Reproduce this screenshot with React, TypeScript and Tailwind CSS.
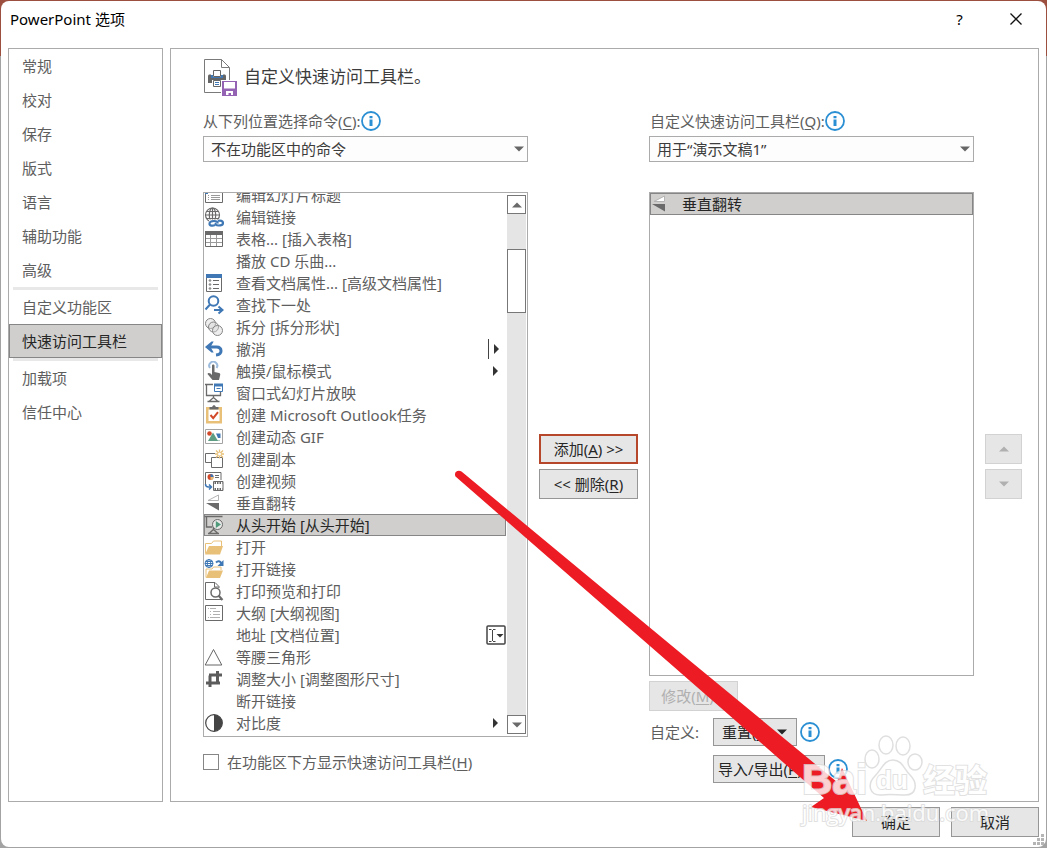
import { useState } from "react";
import type { ReactNode } from "react";
import clsx from "clsx";

type Command = {
  label: string;
  icon?: string;
  trailing?: "menu" | "split" | "combo";
};

const NAV_GROUPS: string[][] = [
  ["常规", "校对", "保存", "版式", "语言", "辅助功能", "高级"],
  ["自定义功能区", "快速访问工具栏"],
  ["加载项", "信任中心"],
];

const COMMANDS: Command[] = [
  { label: "编辑幻灯片标题", icon: "slideTitle" },
  { label: "编辑链接", icon: "editLink" },
  { label: "表格... [插入表格]", icon: "table" },
  { label: "播放 CD 乐曲..." },
  { label: "查看文档属性... [高级文档属性]", icon: "properties" },
  { label: "查找下一处", icon: "findNext" },
  { label: "拆分 [拆分形状]", icon: "fragment" },
  { label: "撤消", icon: "undo", trailing: "split" },
  { label: "触摸/鼠标模式", icon: "touch", trailing: "menu" },
  { label: "窗口式幻灯片放映", icon: "windowShow" },
  { label: "创建 Microsoft Outlook任务", icon: "task" },
  { label: "创建动态 GIF", icon: "gif" },
  { label: "创建副本", icon: "duplicate" },
  { label: "创建视频", icon: "video" },
  { label: "垂直翻转", icon: "flip" },
  { label: "从头开始 [从头开始]", icon: "play" },
  { label: "打开", icon: "open" },
  { label: "打开链接", icon: "openLink" },
  { label: "打印预览和打印", icon: "preview" },
  { label: "大纲 [大纲视图]", icon: "outline" },
  { label: "地址 [文档位置]", trailing: "combo" },
  { label: "等腰三角形", icon: "triangle" },
  { label: "调整大小 [调整图形尺寸]", icon: "crop" },
  { label: "断开链接" },
  { label: "对比度", icon: "contrast", trailing: "menu" },
];

const GRAY = "#6a6a6a";
const BLUE = "#3f78b5";
const SAND = "#e8c078";

const ICONS: Record<string, ReactNode> = {
  slideTitle: (
    <>
      <path d="M1.5 4.5h17v13h-17z" fill="#fff" stroke={GRAY} />
      <path d="M4 10.5h1M7 10.5h9M4 12.5h1M7 12.5h9M4 14.5h1M7 14.5h9" stroke="#9a9a9a" />
      <path d="M1 4h3v5H1z" fill={BLUE} />
    </>
  ),
  editLink: (
    <>
      <g fill="none" stroke={GRAY} strokeWidth="1.2">
        <circle cx="8.5" cy="8" r="7" />
        <ellipse cx="8.5" cy="8" rx="3.2" ry="7" />
        <path d="M1.5 8h14M2.5 4.5h12M2.5 11.5h12M8.5 1v14" />
      </g>
      <path d="M5 12.5h15v7H5z" fill="#fff" />
      <g fill="none" stroke={BLUE} strokeWidth="2.2">
        <path d="M11 18c-2 1-5.500 1-5.500-1.300s2-2.700 4.500-2.700 4 1 3.500 2.500" />
        <path d="M14 14c2.500-1 5 0 5 2s-2 2.500-4.500 2.500S11 17.500 12 16" />
      </g>
    </>
  ),
  table: (
    <>
      <path d="M1.500 2.500h17v15h-17z" fill="#fff" stroke={GRAY} />
      <path d="M1 2h18v4H1z" fill={GRAY} />
      <path d="M6.500 6v11M12.500 6v11M2 9.500h16M2 13.500h16" stroke="#9a9a9a" />
    </>
  ),
  properties: (
    <>
      <path d="M2.500 2.500h15v16h-15z" fill="#fff" stroke={GRAY} />
      <path d="M2 1h16v4H2z" fill={BLUE} />
      <path d="M9 7.500h6M9 11.500h6M9 15.500h6" stroke={GRAY} />
      <g fill="none" stroke={GRAY}>
        <circle cx="6" cy="7.500" r=".8" />
        <circle cx="6" cy="11.500" r=".8" />
        <circle cx="6" cy="15.500" r=".8" />
      </g>
    </>
  ),
  findNext: (
    <g fill="none" stroke={BLUE} strokeWidth="2">
      <circle cx="9.500" cy="6" r="4.800" />
      <path d="M6 9.500 1.500 14.500M10 15h8" />
      <path d="m14.500 11.500 4 3.500-4 3.500" />
    </g>
  ),
  fragment: (
    <g fill="#d4d4d4" fillOpacity=".4" stroke="#858585">
      <circle cx="6.500" cy="6.500" r="5" />
      <circle cx="9.500" cy="10" r="5" />
      <circle cx="13.500" cy="13.500" r="5" />
    </g>
  ),
  undo: (
    <>
      <path d="M4 8h8.500c3 0 4.500 1.500 4.500 4s-2 3.700-5 4" fill="none" stroke={BLUE} strokeWidth="3" />
      <path d="M1 8 7.500 2.500h2.200L6.500 8l3.200 5.500H7.500z" fill={BLUE} />
    </>
  ),
  touch: (
    <>
      <path d="M6 7a4 4 0 1 1 6.500 0" fill="none" stroke="#9dbbdc" strokeWidth="2" />
      <path d="M8 4.500c0-1.500 2.500-1.500 2.500 0V11l4.500 1c1 .3 1.500 1 1.200 2L15 19H8.500L3.500 13c.5-1.500 2-1.300 3-.5L8 14z" fill={GRAY} />
    </>
  ),
  windowShow: (
    <>
      <g fill="none" stroke={GRAY} strokeWidth="1.300">
        <path d="M1 1.500h8M2.500 2v10.500h14V9M9.500 12.500v3M5 18.500l4.500-4 4.500 4M3.500 18.500h12" />
      </g>
      <path d="M10.500 1.500h8v7h-8z" fill="#fff" stroke={BLUE} />
      <path d="M10 .5h9v3h-9z" fill={BLUE} />
      <path d="M12.500 5.500h4" stroke={BLUE} />
    </>
  ),
  task: (
    <>
      <path d="M2 2h16v16.500H2z" fill={SAND} />
      <path d="M4.500 4.500h11V16h-11z" fill="#fff" />
      <path d="M5.500 4.500V2h2.700c.4-2.500 3.200-2.500 3.600 0h2.700v2.500z" fill={GRAY} />
      <path d="m6.500 10 2.700 3.200 4.800-6" fill="none" stroke="#d2492a" strokeWidth="2" />
    </>
  ),
  gif: (
    <>
      <path d="M1.500 2.500h17v14h-17z" fill="#fff" stroke="#a3a3a3" />
      <circle cx="5.500" cy="6.500" r="2.300" fill="#d2492a" />
      <path d="m4 14 5-8.500L14 14z" fill="#5e9c83" />
      <path d="M12 6.500h4.500v4.500H14z" fill={BLUE} />
      <path d="M12.500 13.500h4" stroke="#5e9c83" strokeDasharray="1 1" />
    </>
  ),
  duplicate: (
    <>
      <path d="M7 13.500H1.500v-9H11" fill="none" stroke={GRAY} />
      <path d="M7.500 8.500h11v10h-11z" fill="#fff" stroke={GRAY} />
      <path d="M15.500.5v9M11 5h9M12 1.500l7 7M19 1.500l-7 7" stroke={SAND} strokeWidth="1.300" />
      <circle cx="15.500" cy="5" r="1.500" fill="#fff" />
    </>
  ),
  video: (
    <>
      <path d="M1.500 13V1.500h15.500V9" fill="#fff" stroke={GRAY} />
      <circle cx="6.500" cy="6" r="3" fill="#d2492a" />
      <path d="M6.500 6V3a3 3 0 0 1 3 3z" fill={BLUE} />
      <path d="M6.500 6h3a3 3 0 0 1-3 3z" fill={SAND} />
      <path d="M11 4.500h4M11 6.500h4" stroke={GRAY} />
      <path d="M1.500 13c0 2 1 3 3 3H7M5 13.500 7.500 16 5 18.500" fill="none" stroke={BLUE} strokeWidth="1.500" />
      <path d="M9.500 10.500h9.500v9H9.500z" fill="#fff" stroke={GRAY} />
      <path d="M10.500 12h8M10.500 18h8" stroke={GRAY} strokeWidth="2" strokeDasharray="1.500 1" />
    </>
  ),
  flip: (
    <>
      <path d="M4 7.500 14.500 2v5.500z" fill="#fff" stroke="#b4b4b4" />
      <path d="M2 10h13v7.500z" fill={GRAY} />
    </>
  ),
  play: (
    <>
      <path d="M.5 1.500h18M2.500 2v10h6M9.500 13v2.500M5 18.500l4.500-4 4.500 4M4 18.500h11" fill="none" stroke={GRAY} strokeWidth="1.400" />
      <circle cx="13.500" cy="9.500" r="5" fill="#e8e8e8" stroke={GRAY} />
      <path d="m11.800 6 5.200 3.500-5.200 3.500z" fill="#4f9a7a" />
    </>
  ),
  open: (
    <>
      <path d="M1.500 16.500v-10h6l2-2.500h8v5" fill="#fff" stroke={SAND} />
      <path d="M5 9h14l-3 8.500H1z" fill={SAND} />
    </>
  ),
  openLink: (
    <>
      <path d="M2 18.500V10h6l1.500-2H17v3" fill="#fff" stroke={SAND} />
      <path d="M5 11.500h14l-3 7.500H2z" fill={SAND} />
      <circle cx="5" cy="4.500" r="4.800" fill="#fff" />
      <g fill="none" stroke={BLUE}>
        <circle cx="5" cy="4.500" r="4" />
        <ellipse cx="5" cy="4.500" rx="1.800" ry="4" />
        <path d="M1 4.500h8M1.500 2.500h7M1.500 6.500h7" />
        <path d="M12 3.500c2-2 4-1.500 5.500 1" strokeWidth="2" />
      </g>
      <path d="M19.500 1v6h-6z" fill={BLUE} />
    </>
  ),
  preview: (
    <>
      <path d="M17 18.500H1.500v-17H11l4 4V7" fill="#fff" stroke={GRAY} />
      <path d="M10.500 1.500v4.500H15" fill="none" stroke={GRAY} />
      <circle cx="11.500" cy="11.500" r="4.500" fill="#fff" stroke={GRAY} strokeWidth="1.500" />
      <path d="m14.500 14.500 4 4.500" stroke={GRAY} strokeWidth="2.200" />
    </>
  ),
  outline: (
    <>
      <path d="M1.500 2.500h17v15h-17z" fill="#fff" stroke={GRAY} />
      <path d="M4 5.500h1M6 5.500h6M6 8.500h1M9 8.500h7M6 11.500h1M9 11.500h7M4 14.500h1M6 14.500h10" stroke="#b0b0b0" />
    </>
  ),
  triangle: <path d="M9.500 2.500 17.800 18H1.200z" fill="none" stroke="#666" />,
  crop: (
    <path d="M6 6.500V18M13.500 2v12M2 14h14M5 6h13" fill="none" stroke="#5c5c5c" strokeWidth="3" />
  ),
  contrast: (
    <>
      <circle cx="10" cy="10" r="8.300" fill="#fff" stroke="#444" strokeWidth="1.200" />
      <path d="M10 1.700a8.300 8.300 0 0 1 0 16.600z" fill="#444" />
    </>
  ),
};

function CommandIcon({ name }: { name?: string }) {
  return (
    <svg viewBox="0 0 20 20" className="size-5 shrink-0" aria-hidden="true">
      {name ? ICONS[name] : null}
    </svg>
  );
}

function Trailing({ kind }: { kind: "menu" | "split" | "combo" }) {
  return (
    <svg viewBox="0 0 20 20" className="ml-auto size-5 shrink-0" aria-hidden="true">
      {kind === "menu" && <path d="M7 5v10l5-5z" fill="#333" />}
      {kind === "split" && (
        <>
          <path d="M2.500 0v20" stroke="#444" />
          <path d="M8 5v10l5-5z" fill="#333" />
        </>
      )}
      {kind === "combo" && (
        <>
          <rect x="1" y="1" width="18" height="18" rx="1" fill="#fff" stroke="#444" strokeWidth="1.500" />
          <path d="M3 4.500h2.500M7 4.500h2.500M3 16.500h2.500M7 16.500h2.500M6.500 5v11" stroke="#444" />
          <path d="M10.500 9h7L14 12.500z" fill="#333" />
        </>
      )}
    </svg>
  );
}

function CommandRow({ command, selected, onSelect }: { command: Command; selected: boolean; onSelect?: () => void }) {
  return (
    <li
      role="option"
      aria-selected={selected}
      onClick={onSelect}
      className={clsx(
        "flex h-[22px] items-center whitespace-nowrap",
        selected ? "bg-[#d0cfcd] text-[#262626] ring-1 ring-inset ring-[#868686]" : "text-[#5e5e5e]",
      )}
    >
      <CommandIcon name={command.icon} />
      <span className="ml-3">{command.label}</span>
      {command.trailing && <Trailing kind={command.trailing} />}
    </li>
  );
}

function InfoIcon() {
  return (
    <svg viewBox="0 0 20 20" className="size-5 shrink-0" role="img" aria-label="信息">
      <circle cx="10" cy="10" r="9" fill="#fff" stroke="#2b8fd3" strokeWidth="1.800" />
      <path d="M8.500 5h3v2.200h-3zM8.500 8.500h3V15h-3z" fill="#2b8fd3" />
    </svg>
  );
}

function Arrow({ up, className }: { up?: boolean; className?: string }) {
  return (
    <svg viewBox="0 0 10 6" className={clsx("h-[6px] w-[10px]", className)} aria-hidden="true">
      <path d={up ? "M0 5.500h10L5 .5z" : "M0 .5h10L5 5.500z"} fill="currentColor" />
    </svg>
  );
}

function Dropdown({ id, value }: { id: string; value: string }) {
  return (
    <div className="relative mt-[5px]">
      <select
        id={id}
        className="block h-[26px] w-full appearance-none border border-[#ababab] bg-[#fdfdfd] pl-[7px] text-[#3c3c3c]"
      >
        <option>{value}</option>
      </select>
      <Arrow className="pointer-events-none absolute top-[10px] right-1 text-[#666]" />
    </div>
  );
}

const BUTTON = "border border-[#969696] bg-[#e6e6e6] text-[#262626] whitespace-nowrap";
const BUTTON_DISABLED = "border border-[#d2d2d2] bg-[#e6e6e6] text-[#b0b0b0] whitespace-nowrap";

function HeadingIcon() {
  return (
    <svg viewBox="0 0 36 40" className="h-10 w-9" aria-hidden="true">
      <path d="M1.500 1.500h17l8 8v25h-25z" fill="#fff" stroke="#7a7a7a" />
      <path d="M18.500 1.500v8h8" fill="none" stroke="#7a7a7a" />
      <path d="M5 18.500c0-1.500.5-2 2-2h14c1.500 0 2 .5 2 2V25H5z" fill="#666" />
      <path d="M8 16h12v4H8z" fill="#fff" />
      <path d="M10.500 12.500h7v6h-7z" fill="#fff" stroke="#666" />
      <path d="M8 17h2v2h8v-2h2v3H8z" fill={BLUE} />
      <path d="M9 22h10v7.500H9z" fill="#fff" />
      <path d="M10.500 22.500h7v6h-7z" fill="#fff" stroke="#666" />
      <path d="M12 24.500h4M12 26.500h4" stroke={BLUE} />
      <path d="M18 22h17v17H18z" fill="#fff" />
      <path d="M19 23h15v15H19z" fill="#9563b4" />
      <path d="M21 24h11v6.500H21zM23 33h7v4h-2v-2h-2.500v2H23z" fill="#fff" />
    </svg>
  );
}

function Watermark() {
  return (
    <div className="pointer-events-none absolute right-[57px] bottom-[24px] w-[188px] text-white opacity-80" aria-hidden="true">
      <svg viewBox="0 0 64 66" className="absolute -top-px left-[60px] h-[66px] w-16">
        <g fill="#fff" stroke="#d8d8d8" strokeWidth="1.500">
          <ellipse cx="10" cy="26" rx="7" ry="9" />
          <ellipse cx="24" cy="12" rx="7" ry="9" />
          <ellipse cx="41" cy="13" rx="7" ry="9" />
          <ellipse cx="53" cy="29" rx="7" ry="8" />
          <path d="M31 27c9 0 11 9 17 15 8 8 7 20-5 20-7 0-17-1-23 0-13 1-15-11-7-19 7-7 9-16 18-16z" />
        </g>
      </svg>
      <div className="relative flex h-[66px] items-end font-bold [paint-order:stroke_fill] [-webkit-text-stroke:2px_#dadada]">
        <span className="w-[74px] font-['Liberation_Sans',sans-serif] text-[42px] leading-10">Bai</span>
        <span className="w-[47px] font-['Liberation_Sans',sans-serif] text-[26px] leading-10">du</span>
        <span className="text-[32px] leading-10">经验</span>
      </div>
      <div className="relative font-['Open_Sans',sans-serif] text-[22px] leading-6 [paint-order:stroke_fill] [-webkit-text-stroke:2px_#dadada]">
        jingyan.baidu.com
      </div>
    </div>
  );
}

function PointerArrow() {
  return (
    <svg
      viewBox="0 0 414 353"
      className="pointer-events-none absolute top-[469px] left-[453px] h-[353px] w-[414px]"
      aria-hidden="true"
    >
      <path
        d="M2.500 7.500C.5 3.500 4.500.5 8.500 2.500L236 191l148 122 5-14 25 53-56-14 13-9L213 191z"
        fill="#ed1c24"
      />
    </svg>
  );
}

export default function App() {
  const [section, setSection] = useState("快速访问工具栏");
  const [selected, setSelected] = useState(15);

  return (
    <div className="relative flex min-h-screen flex-col bg-[#a3a3a3] bg-[linear-gradient(#9c4f3f_56px,#a3a3a3_56px)] p-px font-['Noto_Sans','Noto_Sans_CJK_SC',sans-serif] text-[15px] leading-5 text-[#5e5e5e]">
      <div className="flex flex-1 flex-col rounded-lg bg-white px-[7px]">
        <header className="flex h-[47px] items-start justify-between pt-2 pl-[2px] text-black">
          <h1>PowerPoint 选项</h1>
          <div className="flex items-center">
            <button type="button" aria-label="帮助" className="h-5 w-[67px]">
              ?
            </button>
            <button type="button" aria-label="关闭" className="flex h-5 w-[46px] items-center justify-center">
              <svg viewBox="0 0 12 12" className="size-3" aria-hidden="true">
                <path d="m.5.500 11 11M11.500.5l-11 11" stroke="#111" strokeWidth="1.300" />
              </svg>
            </button>
          </div>
        </header>

        <main className="flex flex-1 gap-[7px]">
          <nav className="w-[155px] shrink-0 border border-[#ababab]">
            {NAV_GROUPS.map((group, index) => (
              <div key={group[0]}>
                {index > 0 && <div className="mx-1 h-[3px] bg-[#e8e8e8]" />}
                <ul>
                  {group.map((item) => (
                    <li key={item}>
                      <button
                        type="button"
                        onClick={() => setSection(item)}
                        className={clsx(
                          "block h-[34px] w-full pl-[13px] text-left",
                          item === section && "bg-[#d0cfcd] text-[#262626] ring-1 ring-inset ring-[#868686]",
                        )}
                      >
                        {item}
                      </button>
                    </li>
                  ))}
                </ul>
              </div>
            ))}
          </nav>

          <section className="flex flex-1 flex-col border border-[#ababab] pt-[9px] pr-4 pl-8">
            <div className="flex items-center gap-[5px]">
              <HeadingIcon />
              <h2 className="pb-[2px] text-[17px] text-[#3c3c3c]">自定义快速访问工具栏。</h2>
            </div>

            <div className="mt-[13px] flex flex-1 gap-[11px]">
              <div className="flex flex-1 flex-col pb-[31px]">
                <div className="flex h-5 items-center">
                  <label htmlFor="source">
                    从下列位置选择命令(<u className="underline-offset-2">C</u>):
                  </label>
                  <InfoIcon />
                </div>
                <Dropdown id="source" value="不在功能区中的命令" />

                <div className="mt-[30px] flex flex-1 gap-px overflow-hidden border border-[#ababab] pr-px">
                  <ul role="listbox" aria-label="命令" className="-mt-[9px] flex-1">
                    {COMMANDS.map((command, index) => (
                      <CommandRow
                        key={command.label}
                        command={command}
                        selected={index === selected}
                        onSelect={() => setSelected(index)}
                      />
                    ))}
                  </ul>
                  <div className="my-[2px] flex w-[19px] flex-col bg-[#e5e5e5] text-[#6a6a6a]">
                    <button type="button" aria-label="向上滚动" className="flex h-[19px] items-center justify-center border border-[#777] bg-white">
                      <Arrow up />
                    </button>
                    <div className="mt-[35px] h-16 border border-[#777] bg-white" />
                    <button type="button" aria-label="向下滚动" className="mt-auto flex h-[19px] items-center justify-center border border-[#777] bg-white">
                      <Arrow />
                    </button>
                  </div>
                </div>

                <label className="mt-[17px] flex h-4 items-center gap-2">
                  <input type="checkbox" className="size-4 appearance-none border border-[#868686] bg-white checked:bg-[#868686]" />
                  <span>
                    在功能区下方显示快速访问工具栏(<u className="underline-offset-2">H</u>)
                  </span>
                </label>
              </div>

              <div className="flex w-[99px] shrink-0 flex-col gap-[5px] pt-[323px]">
                <button type="button" className="h-[30px] border-2 border-[#b7472a] bg-[#e6e6e6] text-[#262626]">
                  添加(<u className="underline-offset-2">A</u>) &gt;&gt;
                </button>
                <button type="button" className={clsx(BUTTON, "h-[30px]")}>
                  &lt;&lt; 删除(<u className="underline-offset-2">R</u>)
                </button>
              </div>

              <div className="flex flex-1 flex-col pb-[18px]">
                <div className="flex h-5 items-center">
                  <label htmlFor="target" className="pl-px">
                    自定义快速访问工具栏(<u className="underline-offset-2">Q</u>):
                  </label>
                  <InfoIcon />
                </div>
                <Dropdown id="target" value="用于“演示文稿1”" />

                <ul role="listbox" aria-label="快速访问工具栏" className="mt-[30px] flex-1 border border-[#ababab]">
                  <CommandRow command={{ label: "垂直翻转", icon: "flip" }} selected />
                </ul>

                <button type="button" disabled className={clsx(BUTTON_DISABLED, "mt-[5px] h-[30px] w-[89px]")}>
                  修改(<u className="underline-offset-2">M</u>)...
                </button>
                <div className="mt-[7px] grid grid-cols-[63px_1fr] items-center gap-x-px gap-y-[9px]">
                  <span className="pl-px">自定义:</span>
                  <div className="flex items-center gap-[3px]">
                    <button type="button" className={clsx(BUTTON, "flex h-7 w-[84px] items-center justify-between pr-[9px] pl-2")}>
                      <span>
                        重置(<u className="underline-offset-2">E</u>)
                      </span>
                      <Arrow />
                    </button>
                    <InfoIcon />
                  </div>
                  <div className="col-start-2 flex items-center gap-[3px]">
                    <button type="button" className={clsx(BUTTON, "flex h-7 w-28 items-center justify-between px-1")}>
                      <span>
                        导入/导出(<u className="underline-offset-2">P</u>)
                      </span>
                      <Arrow />
                    </button>
                    <InfoIcon />
                  </div>
                </div>
              </div>

              <div className="flex w-[37px] shrink-0 flex-col gap-[5px] pt-[323px]">
                <button type="button" disabled aria-label="上移" className={clsx(BUTTON_DISABLED, "flex h-[30px] items-center justify-center")}>
                  <Arrow up />
                </button>
                <button type="button" disabled aria-label="下移" className={clsx(BUTTON_DISABLED, "flex h-[30px] items-center justify-center")}>
                  <Arrow />
                </button>
              </div>
            </div>
          </section>
        </main>

        <footer className="flex justify-end gap-[11px] pt-[5px] pb-[10px]">
          <button type="button" className={clsx(BUTTON, "h-[30px] w-[88px]")}>
            确定
          </button>
          <button type="button" className={clsx(BUTTON, "h-[30px] w-[88px]")}>
            取消
          </button>
        </footer>
      </div>

      <svg viewBox="0 0 12 12" className="absolute right-[2px] bottom-[2px] size-3" aria-hidden="true">
        <path d="M8 0h3v3H8zM4 4h3v3H4zM8 4h3v3H8zM0 8h3v3H0zM4 8h3v3H4zM8 8h3v3H8z" fill="#b5b5b5" />
      </svg>
      <PointerArrow />
      <Watermark />
    </div>
  );
}
